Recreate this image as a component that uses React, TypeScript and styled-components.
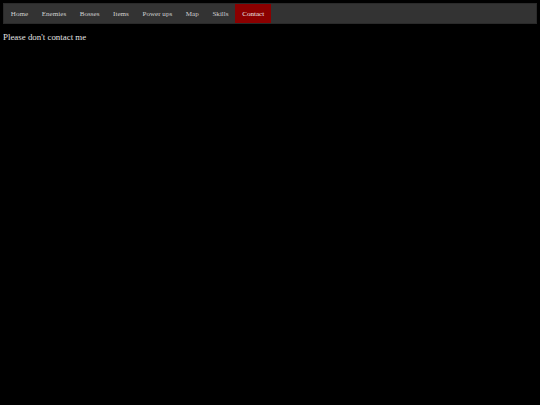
import React from "react";
import styled, { createGlobalStyle } from "styled-components";

const Global = createGlobalStyle`
  html, body { background: #000; }
  body {
    margin: 3px;
    font-family: "Liberation Serif", "Times New Roman", serif;
    color: #ddd;
  }
`;

const Nav = styled.nav`
  display: flex;
  background: #333;
  border: 1px solid #2a2a2a;
  height: 19px;
`;

const NavItem = styled.a<{ $active?: boolean }>`
  display: flex;
  align-items: center;
  padding: 0 6.8px;
  font-size: 7.1px;
  color: ${(p) => (p.$active ? "#eee" : "#d0d0d0")};
  background: ${(p) => (p.$active ? "#8b0000" : "transparent")};
  text-decoration: none;
`;

const Message = styled.p`
  margin: 8px 0 0;
  font-size: 8.9px;
  color: #e0e0e0;
`;

const items = ["Home", "Enemies", "Bosses", "Items", "Power ups", "Map", "Skills", "Contact"];

export default function App() {
  return (
    <>
      <Global />
      <Nav>
        {items.map((t) => (
          <NavItem key={t} $active={t === "Contact"} href="#">
            {t}
          </NavItem>
        ))}
      </Nav>
      <Message>Please don't contact me</Message>
    </>
  );
}
